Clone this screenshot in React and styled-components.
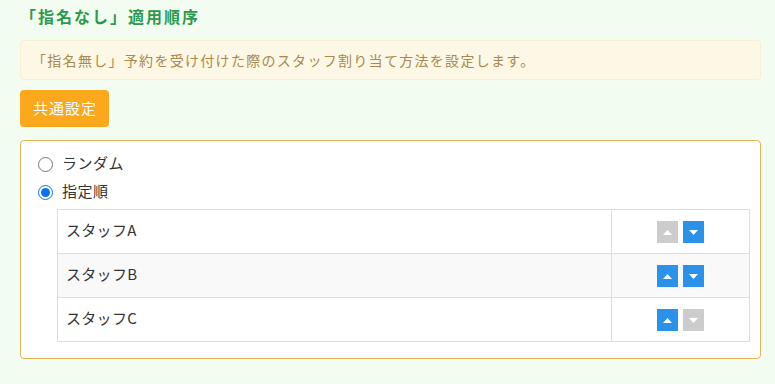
import React from "react";
import styled, { createGlobalStyle } from "styled-components";

const GlobalStyle = createGlobalStyle`
  html, body {
    margin: 0;
    padding: 0;
    background: #f3fcf0;
  }
  body {
    font-family: "Noto Sans CJK JP", "Noto Sans", sans-serif;
    color: #333;
  }
`;

const Page = styled.div`
  padding: 4px 14px 20px 20px;
`;

const Title = styled.h2`
  margin: 0 0 12px 0;
  font-size: 16px;
  font-weight: bold;
  color: #2b9a4c;
  line-height: 24px;
  letter-spacing: 2px;
`;

const Notice = styled.div`
  background: #fdf8e6;
  border: 1px solid #f8efd4;
  border-radius: 4px;
  color: #a8884c;
  font-size: 14px;
  letter-spacing: 1.3px;
  height: 38px;
  display: flex;
  align-items: center;
  padding-left: 11px;
`;

const CommonButton = styled.button`
  margin-top: 10px;
  background: #fca81d;
  color: #fff;
  border: none;
  border-radius: 4px;
  height: 37px;
  width: 89px;
  font-family: inherit;
  font-size: 15px;
  letter-spacing: 1px;
  padding: 0 0 2px 1px;
  cursor: pointer;
`;

const Panel = styled.div`
  margin-top: 13px;
  background: #fff;
  border: 1px solid #e3b45a;
  border-radius: 4px;
  padding: 9px 10px 16px 17px;
`;

const RadioRow = styled.label`
  display: flex;
  align-items: center;
  gap: 9px;
  height: 28px;
  font-size: 15px;
  letter-spacing: 0.5px;
  color: #333;
`;

const RadioText = styled.span`
  padding-bottom: 3px;
`;

const Radio = styled.input`
  margin: 0;
  width: 15px;
  height: 15px;
  accent-color: #0b73f0;
`;

const StaffTable = styled.table`
  margin-left: 19px;
  margin-top: 3px;
  width: calc(100% - 19px);
  border-collapse: collapse;
  font-size: 15px;
  letter-spacing: 0.3px;
`;

const Row = styled.tr`
  background: ${(p) => (p.$striped ? "#f9f9f9" : "#fff")};
`;

const NameCell = styled.td`
  border: 1px solid #dddddd;
  height: 39px;
  padding: 0 8px 4px 8px;
  color: #333;
`;

const ActionCell = styled.td`
  border: 1px solid #dddddd;
  width: 137px;
  padding: 0;
  text-align: center;
`;

const ArrowGroup = styled.div`
  display: inline-flex;
  gap: 5px;
  vertical-align: middle;
`;

const ArrowButton = styled.button`
  width: 21px;
  height: 22px;
  padding: 0;
  border: none;
  background: ${(p) => (p.disabled ? "#cccccc" : "#2a92e9")};
  display: flex;
  align-items: center;
  justify-content: center;
  cursor: ${(p) => (p.disabled ? "default" : "pointer")};
`;

const Arrow = ({ dir }) => (
  <svg width="9" height="5" viewBox="0 0 9 5">
    {dir === "up" ? (
      <polygon points="0,5 9,5 4.5,0" fill="#fff" />
    ) : (
      <polygon points="0,0 9,0 4.5,5" fill="#fff" />
    )}
  </svg>
);

const staff = ["スタッフA", "スタッフB", "スタッフC"];

export default function App() {
  return (
    <>
      <GlobalStyle />
      <Page>
        <Title>「指名なし」適用順序</Title>
        <Notice>
          「指名無し」予約を受け付けた際のスタッフ割り当て方法を設定します。
        </Notice>
        <CommonButton>共通設定</CommonButton>
        <Panel>
          <RadioRow>
            <Radio type="radio" name="order" />
            <RadioText>ランダム</RadioText>
          </RadioRow>
          <RadioRow>
            <Radio type="radio" name="order" defaultChecked />
            <RadioText>指定順</RadioText>
          </RadioRow>
          <StaffTable>
            <tbody>
              {staff.map((name, i) => (
                <Row key={name} $striped={i % 2 === 1}>
                  <NameCell>{name}</NameCell>
                  <ActionCell>
                    <ArrowGroup>
                      <ArrowButton disabled={i === 0}>
                        <Arrow dir="up" />
                      </ArrowButton>
                      <ArrowButton disabled={i === staff.length - 1}>
                        <Arrow dir="down" />
                      </ArrowButton>
                    </ArrowGroup>
                  </ActionCell>
                </Row>
              ))}
            </tbody>
          </StaffTable>
        </Panel>
      </Page>
    </>
  );
}
